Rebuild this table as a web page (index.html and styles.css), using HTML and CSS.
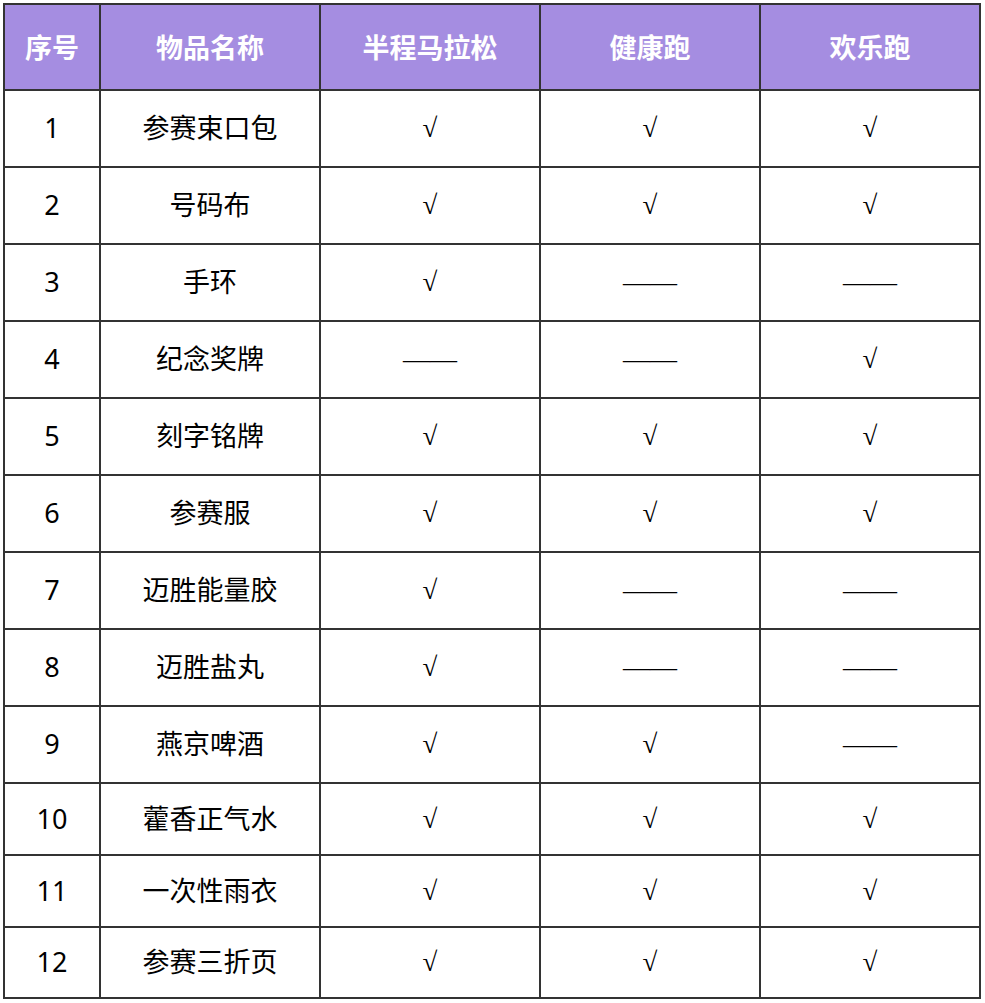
FILE: index.html
```html
<!DOCTYPE html>
<html lang="zh-CN">
<head>
<meta charset="utf-8">
<title>物品清单</title>
<link rel="stylesheet" href="styles.css">
</head>
<body>
<table class="kit">
  <colgroup>
    <col class="c-no">
    <col class="c-name">
    <col class="c-opt">
    <col class="c-opt">
    <col class="c-opt">
  </colgroup>
  <thead>
    <tr class="head">
      <th>序号</th><th>物品名称</th><th>半程马拉松</th><th>健康跑</th><th>欢乐跑</th>
    </tr>
  </thead>
  <tbody>
    <tr><td class="num">1</td><td>参赛束口包</td><td class="ck">√</td><td class="ck">√</td><td class="ck">√</td></tr>
    <tr><td class="num">2</td><td>号码布</td><td class="ck">√</td><td class="ck">√</td><td class="ck">√</td></tr>
    <tr><td class="num">3</td><td>手环</td><td class="ck">√</td><td class="dash">——</td><td class="dash">——</td></tr>
    <tr><td class="num">4</td><td>纪念奖牌</td><td class="dash">——</td><td class="dash">——</td><td class="ck">√</td></tr>
    <tr><td class="num">5</td><td>刻字铭牌</td><td class="ck">√</td><td class="ck">√</td><td class="ck">√</td></tr>
    <tr><td class="num">6</td><td>参赛服</td><td class="ck">√</td><td class="ck">√</td><td class="ck">√</td></tr>
    <tr><td class="num">7</td><td>迈胜能量胶</td><td class="ck">√</td><td class="dash">——</td><td class="dash">——</td></tr>
    <tr><td class="num">8</td><td>迈胜盐丸</td><td class="ck">√</td><td class="dash">——</td><td class="dash">——</td></tr>
    <tr><td class="num">9</td><td>燕京啤酒</td><td class="ck">√</td><td class="ck">√</td><td class="dash">——</td></tr>
    <tr class="short"><td class="num">10</td><td>藿香正气水</td><td class="ck">√</td><td class="ck">√</td><td class="ck">√</td></tr>
    <tr class="short"><td class="num">11</td><td>一次性雨衣</td><td class="ck">√</td><td class="ck">√</td><td class="ck">√</td></tr>
    <tr class="short last"><td class="num">12</td><td>参赛三折页</td><td class="ck">√</td><td class="ck">√</td><td class="ck">√</td></tr>
  </tbody>
</table>
</body>
</html>
```
FILE: styles.css
```css
html, body {
  margin: 0;
  padding: 0;
  background: #ffffff;
}

body {
  padding: 3px 0 0 3px;
  font-family: "Noto Sans", "Noto Sans CJK SC", sans-serif;
  color: #000000;
}

.kit {
  border-collapse: collapse;
  table-layout: fixed;
  width: 978px;
}

.c-no { width: 96px; }
.c-name { width: 220px; }
.c-opt { width: 220px; }

.kit th,
.kit td {
  border: 2px solid #333333;
  padding: 0;
  text-align: center;
  vertical-align: middle;
  font-size: 27px;
  line-height: 1.2;
}

.kit th {
  background: #a58de1;
  color: #ffffff;
  font-weight: 700;
  font-family: "Noto Sans CJK SC", sans-serif;
}

.head { height: 86px; }

.kit tbody tr { height: 77px; }
.kit tbody tr.short { height: 72px; }
.kit tbody tr.last { height: 71px; }

.kit td {
  font-family: "Noto Sans", "Noto Sans CJK SC", sans-serif;
}

.kit td.ck {
  font-family: "Liberation Serif", serif;
  font-size: 27px;
}

.kit td.dash {
  font-family: "Liberation Serif", serif;
  font-size: 27px;
}
```
